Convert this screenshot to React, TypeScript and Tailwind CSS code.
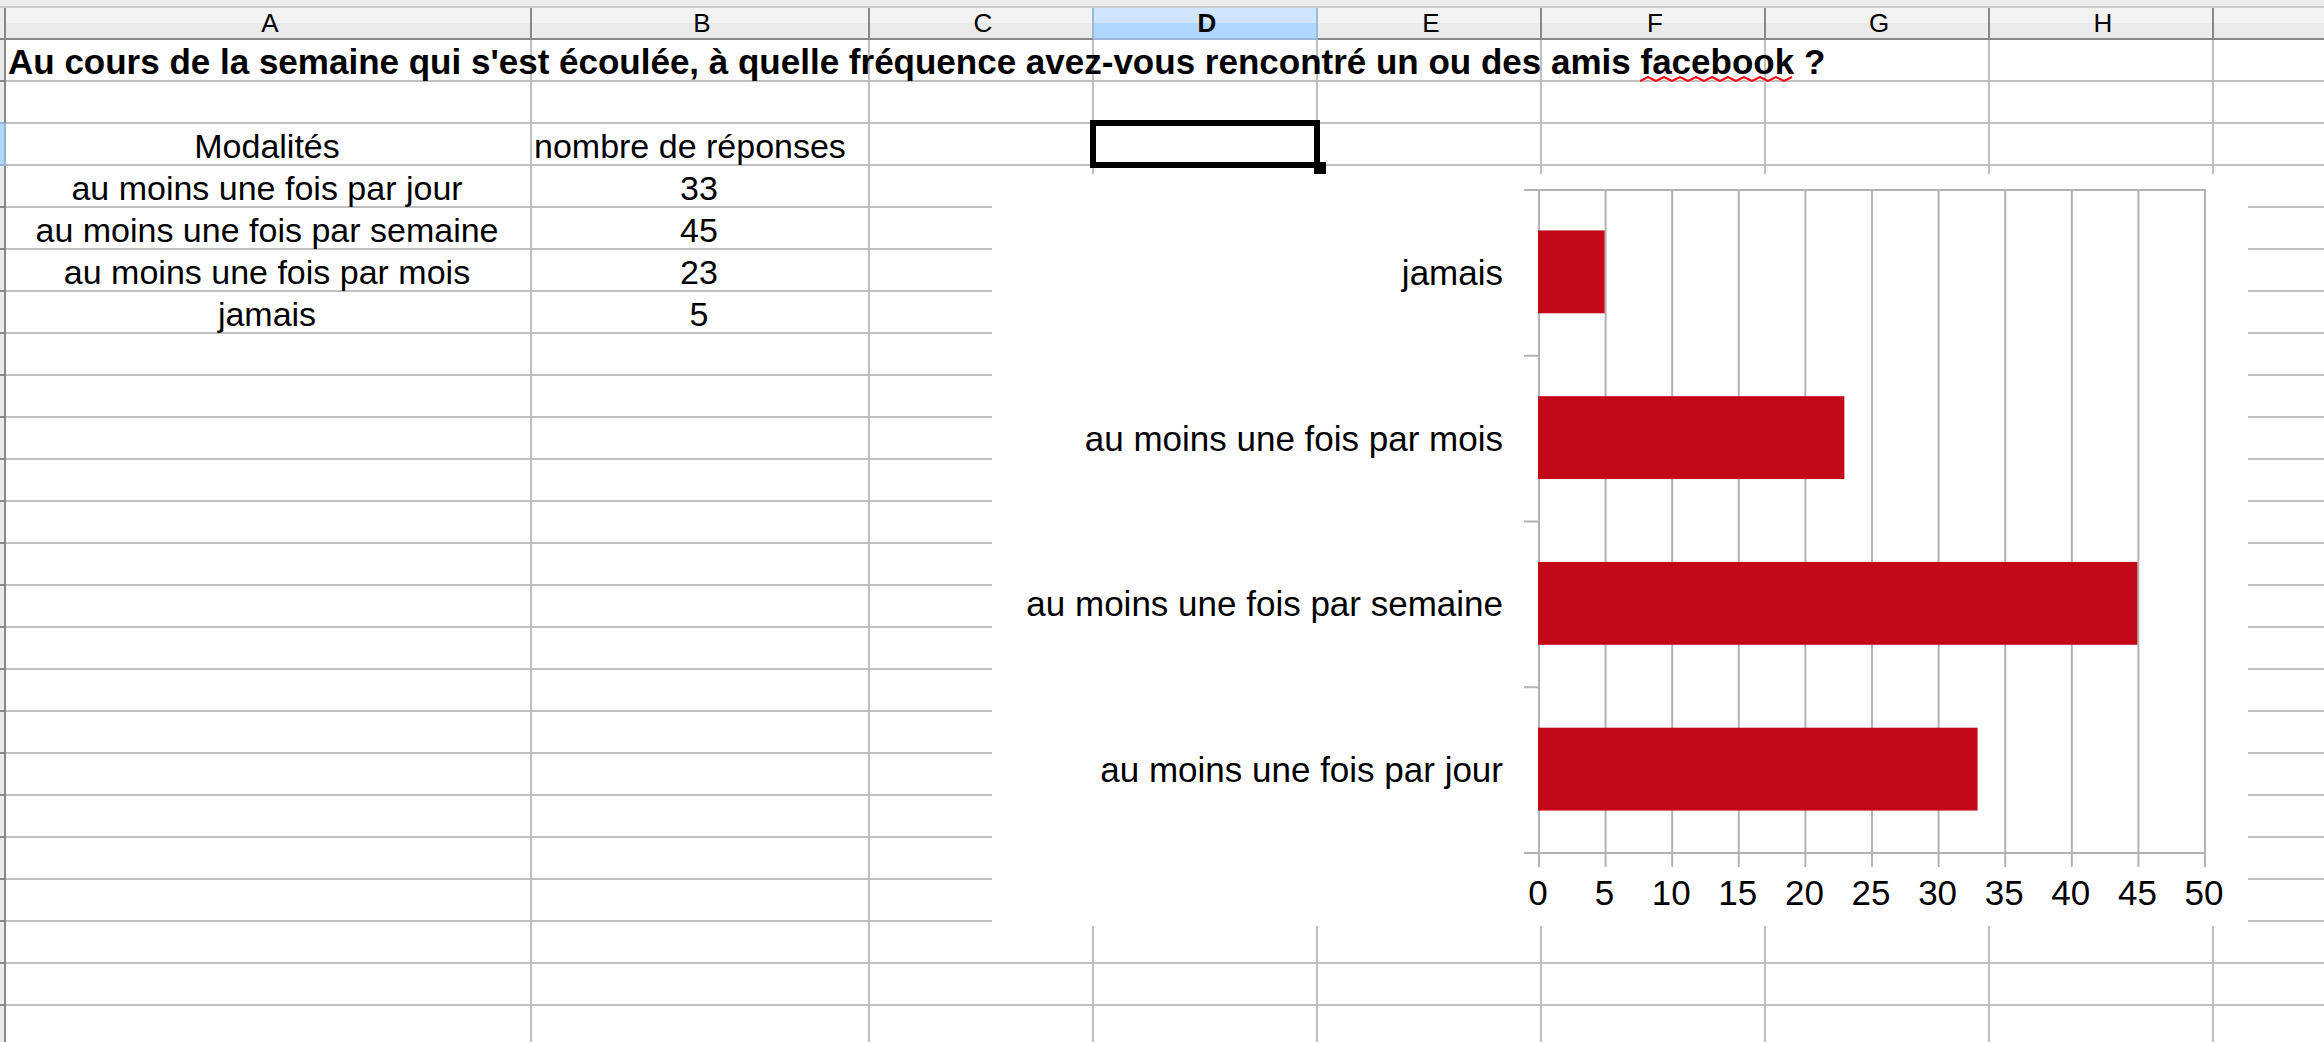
const columns = [
  { name: 'A', width: 'w-[526px]' },
  { name: 'B', width: 'w-[338px]' },
  { name: 'C', width: 'w-[224px]' },
  { name: 'D', width: 'w-[224px]' },
  { name: 'E', width: 'w-[224px]' },
  { name: 'F', width: 'w-[224px]' },
  { name: 'G', width: 'w-[224px]' },
  { name: 'H', width: 'w-[224px]' },
  { name: '', width: 'w-auto' },
];

const data = [
  { label: 'au moins une fois par jour', value: 33 },
  { label: 'au moins une fois par semaine', value: 45 },
  { label: 'au moins une fois par mois', value: 23 },
  { label: 'jamais', value: 5 },
];

const ROW_COUNT = 24;
const SELECTED_COLUMN = 'D';
const SELECTED_ROW = 3;

function Squiggle() {
  const points = Array.from({ length: 20 }, (_, i) => `${i * 8},${i % 2 === 0 ? 5 : 1}`).join(' ');
  return (
    <svg className="absolute top-full left-0 -mt-1 h-1.5 w-full" aria-hidden="true">
      <polyline points={points} fill="none" stroke="#ff0010" strokeWidth="2" />
    </svg>
  );
}

function Title() {
  return (
    <span className="relative text-[35px] font-bold">
      Au cours de la semaine qui s'est écoulée, à quelle fréquence avez-vous rencontré un ou des amis{' '}
      <span className="relative inline-block leading-9">
        facebook
        <Squiggle />
      </span>{' '}
      ?
    </span>
  );
}

function Selection() {
  return (
    <div className="absolute -inset-1 z-10 border-[6px] border-black" aria-hidden="true">
      <div className="absolute -right-3 -bottom-3 size-3 bg-black" />
    </div>
  );
}

function cellContent(column: string, row: number) {
  if (row === 1 && column === 'A') return <Title />;
  if (row === 3 && column === 'A') return 'Modalités';
  if (row === 3 && column === 'B') return 'nombre de réponses';
  const entry = data[row - 4];
  if (entry && column === 'A') return entry.label;
  if (entry && column === 'B') return entry.value;
  return null;
}

function Chart() {
  const left = 547;
  const right = 1213;
  const top = 16;
  const bottom = 679;
  const band = (bottom - top) / data.length;
  const unit = (right - left) / 50;
  const ticks = Array.from({ length: 11 }, (_, i) => i * 5);
  const bars = [...data].reverse();

  return (
    <svg width="1256" height="752" className="block" role="img" aria-label="Nombre de réponses par modalité">
      <g stroke="#b3b3b3" strokeWidth="2">
        {ticks.map((t) => (
          <line key={t} x1={left + t * unit} x2={left + t * unit} y1={top} y2={bottom + 14} />
        ))}
        <line x1={left - 15} x2={right + 1} y1={top} y2={top} />
        <line x1={left - 15} x2={right + 1} y1={bottom} y2={bottom} />
        {[1, 2, 3].map((i) => (
          <line key={i} x1={left - 15} x2={left} y1={top + i * band} y2={top + i * band} />
        ))}
      </g>
      {bars.map((bar, i) => (
        <g key={bar.label}>
          <rect x={left - 1} y={top - 1 + (i + 0.25) * band} width={bar.value * unit} height={band / 2} fill="#c30818" />
          <text x={left - 36} y={top + (i + 0.5) * band + 12} textAnchor="end" className="text-[35px]">
            {bar.label}
          </text>
        </g>
      ))}
      {ticks.map((t) => (
        <text key={t} x={left - 1 + t * unit} y={bottom + 52} textAnchor="middle" className="text-[35px]">
          {t}
        </text>
      ))}
    </svg>
  );
}

export default function App() {
  const rows = Array.from({ length: ROW_COUNT }, (_, i) => i + 1);
  return (
    <main className="h-screen overflow-hidden bg-white font-['Liberation_Sans',Arial,sans-serif] text-black">
      <div className="h-2 border-b-2 border-[#c9c9c9] bg-[#ebebeb]" />
      <div className="relative">
        <table className="w-full min-w-[2280px] table-fixed border-separate border-spacing-0 text-[34px] leading-9">
          <thead>
            <tr className="h-8">
              <td className="w-1.5 border-r-2 border-b-2 border-[#888888] bg-[#ebebeb] p-0" />
              {columns.map(({ name, width }) => {
                const tone =
                  name === SELECTED_COLUMN
                    ? 'border-[#9abadb] bg-linear-to-b from-[#d0e6ff] from-50% to-[#b0d7ff] to-50% font-bold'
                    : name === 'C'
                      ? 'border-r-[#9abadb] border-b-[#888888] bg-linear-to-b from-[#f3f3f3] from-50% to-[#ebebeb] to-50% font-normal'
                      : 'border-[#888888] bg-linear-to-b from-[#f3f3f3] from-50% to-[#ebebeb] to-50% font-normal';
                return (
                  <th
                    key={name}
                    scope="col"
                    className={`${width} ${tone} ${name ? 'border-r-2' : ''} border-b-2 py-0 pr-0 pl-1 text-[26px] leading-[30px]`}
                  >
                    {name}
                  </th>
                );
              })}
            </tr>
          </thead>
          <tbody>
            {rows.map((row) => (
              <tr key={row} className="h-[42px]">
                <td
                  className={
                    row === SELECTED_ROW
                      ? 'border-r-2 border-b-2 border-[#93b4d6] bg-[#b0d7ff] p-0'
                      : row === SELECTED_ROW - 1
                        ? 'border-r-2 border-b-2 border-r-[#888888] border-b-[#93b4d6] bg-[#ebebeb] p-0'
                        : 'border-r-2 border-b-2 border-[#888888] bg-[#ebebeb] p-0'
                  }
                />
                {columns.map(({ name }) => {
                  const selected = name === SELECTED_COLUMN && row === SELECTED_ROW;
                  return (
                    <td
                      key={name}
                      className={`border-b-2 border-[#bfbfbf] pt-1 pr-1 pb-0 pl-0.5 whitespace-nowrap ${
                        name ? 'border-r-2' : ''
                      } ${selected ? 'relative' : ''} ${
                        row >= 3 && !(row === 3 && name === 'B') ? 'text-center' : 'text-left'
                      }`}
                    >
                      {cellContent(name, row)}
                      {selected && <Selection />}
                    </td>
                  );
                })}
              </tr>
            ))}
          </tbody>
        </table>
        <div className="absolute top-[166px] left-[992px] bg-white">
          <Chart />
        </div>
      </div>
    </main>
  );
}
